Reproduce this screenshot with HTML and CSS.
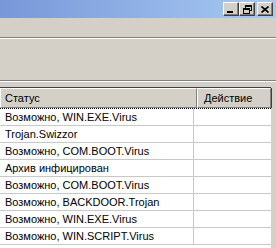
FILE: index.html
```html
<!DOCTYPE html>
<html lang="ru">
  <head>
    <meta charset="UTF-8" />
    <title>Результаты проверки</title>
    <link rel="stylesheet" href="styles.css">
  </head>
  <body>
    <div class="window">
      <div class="titlebar">
        <div class="caption-buttons">
          <span class="cap-btn">
            <svg width="8" height="7" viewBox="0 0 8 7"><rect x="0" y="5" width="6" height="2" fill="#000"/></svg>
          </span>
          <span class="cap-btn">
            <svg width="9" height="9" viewBox="0 0 9 9">
              <rect x="2.5" y="0.5" width="6" height="5" fill="none" stroke="#000"/>
              <rect x="2" y="0" width="7" height="2" fill="#000"/>
              <rect x="0.5" y="3.5" width="6" height="5" fill="#d4d0c8" stroke="#000"/>
              <rect x="0" y="3" width="7" height="2" fill="#000"/>
            </svg>
          </span>
          <span class="cap-btn close">
            <svg width="8" height="7" viewBox="0 0 8 7"><path d="M0.5 0.5 L7.5 6.5 M7.5 0.5 L0.5 6.5" stroke="#000" stroke-width="1.6"/></svg>
          </span>
        </div>
      </div>
      <div class="band band-top"></div>
      <div class="band band-mid"></div>
      <div class="list">
        <div class="list-head">
          <div class="col col-status">Статус</div>
          <div class="col col-action">Действие</div>
        </div>
        <div class="rows">
          <div class="row focused"><div class="cell cell-status">Возможно, WIN.EXE.Virus</div><div class="cell cell-action"></div></div>
          <div class="row"><div class="cell cell-status">Trojan.Swizzor</div><div class="cell cell-action"></div></div>
          <div class="row"><div class="cell cell-status">Возможно, COM.BOOT.Virus</div><div class="cell cell-action"></div></div>
          <div class="row"><div class="cell cell-status">Архив инфицирован</div><div class="cell cell-action"></div></div>
          <div class="row"><div class="cell cell-status">Возможно, COM.BOOT.Virus</div><div class="cell cell-action"></div></div>
          <div class="row"><div class="cell cell-status">Возможно, BACKDOOR.Trojan</div><div class="cell cell-action"></div></div>
          <div class="row"><div class="cell cell-status">Возможно, WIN.EXE.Virus</div><div class="cell cell-action"></div></div>
          <div class="row"><div class="cell cell-status">Возможно, WIN.SCRIPT.Virus</div><div class="cell cell-action"></div></div>
        </div>
      </div>
    </div>
  </body>
</html>
```

FILE: styles.css
```css
body {
  margin: 0;
  width: 276px;
  height: 248px;
  overflow: hidden;
  background: #d4d0c8;
  font-family: "Liberation Sans", Arial, sans-serif;
  font-size: 11px;
  color: #000;
}
.window {
  display: flex;
  flex-direction: column;
  height: 248px;
}
.titlebar {
  height: 18px;
  flex-shrink: 0;
  background: linear-gradient(to right, #7797d8, #a8caf2);
  display: flex;
  justify-content: flex-end;
  align-items: flex-start;
}
.caption-buttons {
  display: flex;
  padding: 2px 3px 0 0;
}
.cap-btn {
  width: 14px;
  height: 12px;
  background: #d4d0c8;
  border: 1px solid;
  border-color: #fff #404040 #404040 #fff;
  box-shadow: inset -1px -1px 0 #808080;
  display: flex;
  align-items: center;
  justify-content: center;
}
.cap-btn.close {
  margin-left: 2px;
}
.band {
  flex-shrink: 0;
  background: #d4d0c8;
  border-bottom: 1px solid #808080;
  box-shadow: 0 1px 0 #fff;
  margin-bottom: 1px;
}
.band-top {
  height: 19px;
}
.band-mid {
  height: 41px;
}
.list {
  margin-top: 5px;
  margin-right: 5px;
  background: #fff;
  border-top: 1px solid #404040;
  flex: 1;
}
.list-head {
  display: flex;
  height: 20px;
  box-sizing: border-box;
  background: #d4d0c8;
}
.col {
  display: flex;
  align-items: center;
  border: 1px solid;
  border-color: #fff #808080 #808080 #fff;
  box-shadow: 1px 0 0 #404040;
}
.col-status {
  width: 191px;
  padding-left: 4px;
}
.col-action {
  flex: 1;
  padding-left: 6px;
}
.row {
  display: flex;
  height: 17px;
  box-sizing: border-box;
  border-bottom: 1px solid #c8c8c8;
}
.row.focused {
  border-top: 1px dotted #000;
  height: 18px;
}
.cell {
  display: flex;
  align-items: center;
  white-space: nowrap;
  overflow: hidden;
}
.cell-status {
  width: 194px;
  padding-left: 5px;
  box-sizing: border-box;
  border-right: 1px solid #c8c8c8;
}
.cell-action {
  flex: 1;
}
```
